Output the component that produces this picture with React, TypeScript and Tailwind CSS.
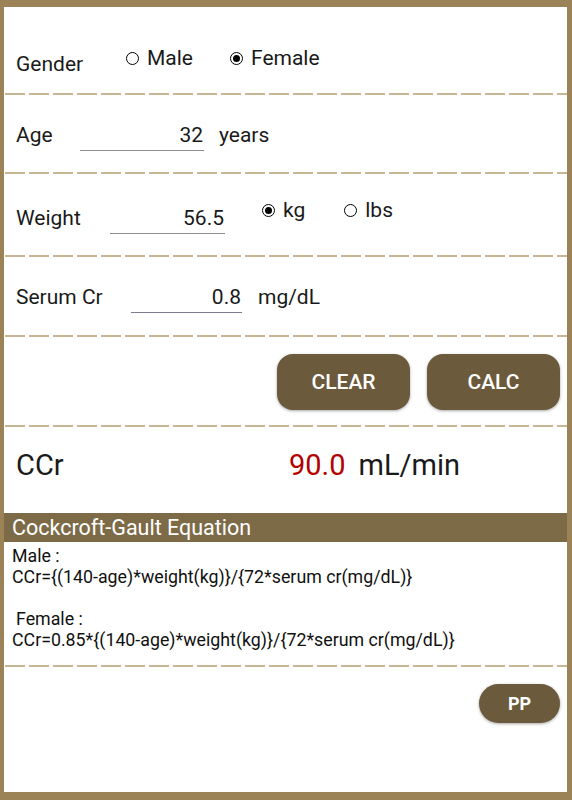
const font = { fontFamily: 'Roboto, "Liberation Sans", sans-serif' };

function Dash() {
  return (
    <div className="h-[2px] w-full pl-[1px]">
      <div className="h-full w-full bg-[repeating-linear-gradient(90deg,#c8b693_0_20px,transparent_20px_24px)]" />
    </div>
  );
}

function Radio({ checked, label }: { checked?: boolean; label: string }) {
  return (
    <div className="flex items-center">
      <span className="flex h-[13px] w-[13px] items-center justify-center rounded-full border-[1.5px] border-black">
        {checked && <span className="h-[7px] w-[7px] rounded-full bg-black" />}
      </span>
      <span className="ml-[8px]">{label}</span>
    </div>
  );
}

function Field({ value, width }: { value: string; width: string }) {
  return (
    <div className={`${width} border-b border-[#8e8e8e] pb-[3px] pr-[1px] text-right`}>{value}</div>
  );
}

export default function App() {
  return (
    <div
      className="h-[800px] w-[572px] bg-[#9b8257] pb-[8px] pl-[4px] pr-[5px] pt-[7px] text-[21px] leading-[24px] text-[#1a1a1a]"
      style={font}
    >
      <div className="flex h-full flex-col bg-white">
        <div className="flex h-[86px] items-start">
          <div className="ml-[12px] w-[110px] pt-[45px]">Gender</div>
          <div className="flex gap-[37px] pt-[39px]">
            <Radio label="Male" />
            <Radio checked label="Female" />
          </div>
        </div>
        <Dash />

        <div className="flex h-[77px] items-start pt-[28px]">
          <div className="ml-[12px] w-[64px]">Age</div>
          <Field value="32" width="w-[124px]" />
          <div className="ml-[15px]">years</div>
        </div>
        <Dash />

        <div className="flex h-[81px] items-start">
          <div className="ml-[12px] w-[94px] pt-[32px]">Weight</div>
          <div className="pt-[32px]">
            <Field value="56.5" width="w-[115px]" />
          </div>
          <div className="ml-[37px] flex gap-[39px] pt-[24px]">
            <Radio checked label="kg" />
            <Radio label="lbs" />
          </div>
        </div>
        <Dash />

        <div className="flex h-[78px] items-start pt-[28px]">
          <div className="ml-[12px] w-[115px]">Serum Cr</div>
          <div className="w-[111px] border-b border-[#7c7c90] pb-[3px] pr-[1px] text-right">0.8</div>
          <div className="ml-[16px]">mg/dL</div>
        </div>
        <Dash />

        <div className="flex h-[88px] items-start justify-end gap-[17px] pr-[7px] pt-[17px]">
          <button className="h-[56px] w-[133px] rounded-[16px] bg-[#6b5a3c] text-[21px] font-medium text-white shadow-[0_1px_3px_rgba(0,0,0,0.35)]">
            CLEAR
          </button>
          <button className="h-[56px] w-[133px] rounded-[16px] bg-[#6b5a3c] text-[21px] font-medium text-white shadow-[0_1px_3px_rgba(0,0,0,0.35)]">
            CALC
          </button>
        </div>
        <Dash />

        <div className="flex h-[86px] items-start pt-[22px] text-[29px] leading-[32px]">
          <div className="ml-[12px] w-[273px]">CCr</div>
          <div className="text-[#b30000]">90.0</div>
          <div className="ml-[13px]">mL/min</div>
        </div>

        <div className="h-[29px] bg-[#7d6a47] pl-[8px] pt-[3px] text-[21.5px] text-white">Cockcroft-Gault Equation</div>

        <div className="h-[123px] pl-[8px] pt-[3px] text-[17.8px] leading-[21px] text-[#111]">
          <div>Male :</div>
          <div>CCr={'{'}(140-age)*weight(kg){'}'}/{'{'}72*serum cr(mg/dL){'}'}</div>
          <div className="h-[21px]" />
          <div className="pl-[4px]">Female :</div>
          <div>CCr=0.85*{'{'}(140-age)*weight(kg){'}'}/{'{'}72*serum cr(mg/dL){'}'}</div>
        </div>
        <Dash />

        <div className="flex justify-end pr-[7px] pt-[17px]">
          <button className="h-[39px] w-[81px] rounded-full bg-[#6b5a3c] text-[18px] font-bold text-white shadow-[0_1px_3px_rgba(0,0,0,0.35)]">
            PP
          </button>
        </div>
      </div>
    </div>
  );
}
